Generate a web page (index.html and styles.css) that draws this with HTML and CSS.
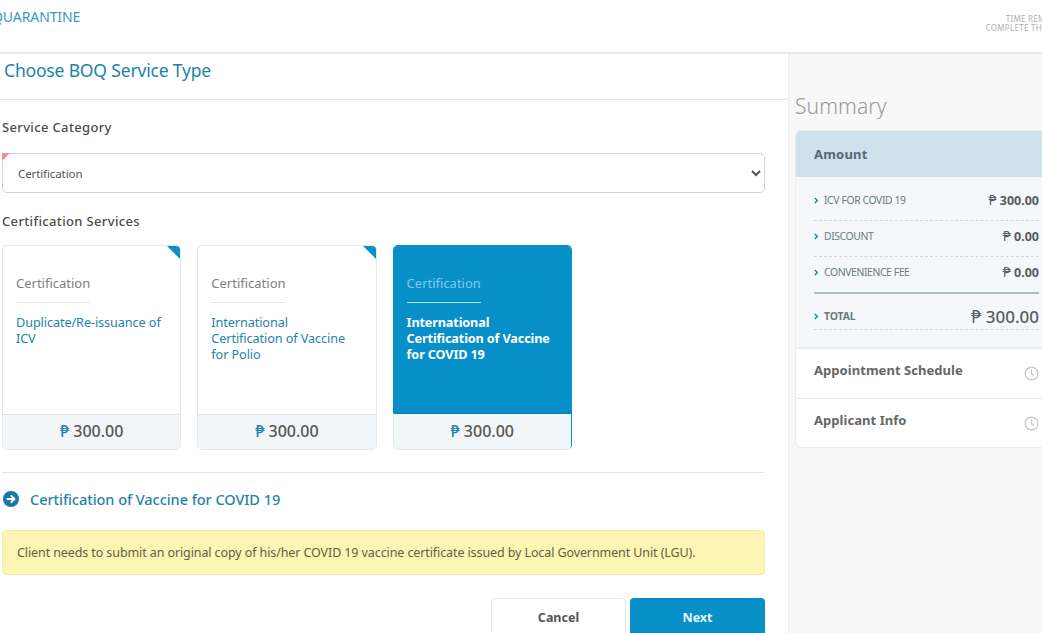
FILE: index.html
```html
<!DOCTYPE html>
<html lang="en">
<head>
<meta charset="utf-8">
<title>Choose BOQ Service Type</title>
<link rel="stylesheet" href="styles.css">
</head>
<body>
<header class="topbar">
  <div class="brand">QUARANTINE</div>
  <div class="timer"><div>TIME REMAINING</div><div>COMPLETE THIS FORM</div></div>
</header>
<div class="layout">
  <main class="main">
    <h1 class="page-title">Choose BOQ Service Type</h1>
    <div class="content">
      <h2 class="label label-first">Service Category</h2>
      <div class="select-wrap">
        <span class="required"></span>
        <select class="select"><option>Certification</option></select>
      </div>
      <h2 class="label label-second">Certification Services</h2>
      <div class="cards">
        <article class="card">
          <span class="corner"></span>
          <div class="card-body">
            <div class="card-cat">Certification</div>
            <div class="card-title">Duplicate/Re-issuance of ICV</div>
          </div>
          <div class="card-price"><span class="peso">₱</span> 300.00</div>
        </article>
        <article class="card">
          <span class="corner"></span>
          <div class="card-body">
            <div class="card-cat">Certification</div>
            <div class="card-title">International Certification of Vaccine for Polio</div>
          </div>
          <div class="card-price"><span class="peso">₱</span> 300.00</div>
        </article>
        <article class="card card-active">
          <div class="card-body">
            <div class="card-cat">Certification</div>
            <div class="card-title">International Certification of Vaccine for COVID 19</div>
          </div>
          <div class="card-price"><span class="peso">₱</span> 300.00</div>
        </article>
      </div>
      <hr class="divider">
      <div class="selected">
        <svg class="arrow-icon" viewBox="0 0 16 16" width="16" height="16"><circle cx="8" cy="8" r="8" fill="#1479a8"/><path d="M3.6 8h7.6M7.8 4.4 11.4 8l-3.6 3.6" fill="none" stroke="#fff" stroke-width="2"/></svg>
        <span>Certification of Vaccine for COVID 19</span>
      </div>
      <div class="alert">Client needs to submit an original copy of his/her COVID 19 vaccine certificate issued by Local Government Unit (LGU).</div>
      <div class="actions">
        <button class="btn btn-cancel">Cancel</button>
        <button class="btn btn-next">Next</button>
      </div>
    </div>
  </main>
  <aside class="side">
    <div class="side-title">Summary</div>
    <section class="panel">
      <div class="panel-head">Amount</div>
      <div class="amounts">
        <div class="row"><span class="row-label"><svg class="chev" viewBox="0 0 6 8" width="5" height="7"><path d="M1 1l3 3-3 3" fill="none" stroke="#1b84ab" stroke-width="1.7"/></svg>ICV FOR COVID 19</span><span class="row-val"><span class="peso-s">₱</span> 300.00</span></div>
        <div class="row"><span class="row-label"><svg class="chev" viewBox="0 0 6 8" width="5" height="7"><path d="M1 1l3 3-3 3" fill="none" stroke="#1b84ab" stroke-width="1.7"/></svg>DISCOUNT</span><span class="row-val"><span class="peso-s">₱</span> 0.00</span></div>
        <div class="row row-last"><span class="row-label"><svg class="chev" viewBox="0 0 6 8" width="5" height="7"><path d="M1 1l3 3-3 3" fill="none" stroke="#1b84ab" stroke-width="1.7"/></svg>CONVENIENCE FEE</span><span class="row-val"><span class="peso-s">₱</span> 0.00</span></div>
        <div class="row row-total"><span class="row-label"><svg class="chev" viewBox="0 0 6 8" width="5" height="7"><path d="M1 1l3 3-3 3" fill="none" stroke="#1b84ab" stroke-width="1.7"/></svg>TOTAL</span><span class="row-val"><span class="peso-s">₱</span> 300.00</span></div>
      </div>
      <div class="step step-first"><span>Appointment Schedule</span><svg class="clock" viewBox="0 0 16 16" width="15" height="15"><circle cx="8" cy="8" r="6.8" fill="none" stroke="#c4c8c9" stroke-width="1.3"/><path d="M8 3.8V8.4l2.6 1.6" fill="none" stroke="#c4c8c9" stroke-width="1.3"/></svg></div>
      <div class="step step-last"><span>Applicant Info</span><svg class="clock" viewBox="0 0 16 16" width="15" height="15"><circle cx="8" cy="8" r="6.8" fill="none" stroke="#c4c8c9" stroke-width="1.3"/><path d="M8 3.8V8.4l2.6 1.6" fill="none" stroke="#c4c8c9" stroke-width="1.3"/></svg></div>
    </section>
  </aside>
</div>
</body>
</html>
```
FILE: styles.css
```css
* { box-sizing: border-box; }
html, body { margin: 0; height: 633px; overflow: hidden; background: #fff; }
body { font-family: "Noto Sans", "Open Sans", sans-serif; color: #555; width: 1042px; }
.topbar { height: 54px; border-bottom: 2px solid #e9eaea; display: flex; justify-content: space-between; position: relative; overflow: hidden; }
.brand { margin: 7px 0 0 -8px; font-size: 14px; line-height: 20px; color: #3d9ab8; letter-spacing: -0.1px; }
.timer { margin: 14px -34px 0 0; font-size: 8px; line-height: 9px; color: #b0b0b0; text-align: right; white-space: nowrap; width: 106px; letter-spacing: 0.3px; }
.layout { display: flex; height: 579px; }
.main { width: 788px; flex: none; }
.page-title { margin: 0; height: 46px; border-bottom: 1px solid #dfe0e0; padding: 4px 0 0 4px; font-size: 17.5px; line-height: 24px; font-weight: 400; color: #2183a8; letter-spacing: -0.17px; }
.content { padding: 0 23px 0 2px; }
.label { margin: 0; font-size: 13px; line-height: 18px; font-weight: 500; color: #4c4c4c; letter-spacing: 0.35px; }
.label-first { padding-top: 18px; margin-bottom: 17px; }
.label-second { margin-top: 19px; margin-bottom: 15px; }
.select-wrap { position: relative; }
.required { position: absolute; left: 0; top: 0; width: 0; height: 0; border-top: 8px solid #ec8f93; border-right: 8px solid transparent; }
.select { display: block; width: 100%; height: 40px; padding: 0 11px; font: 11.5px "Noto Sans", sans-serif; color: #555; letter-spacing: -0.1px; background: #fff; border: 1px solid #d3d5d5; border-radius: 5px; }
.cards { display: flex; gap: 16px; }
.card { position: relative; width: 179.3px; height: 205px; display: flex; flex-direction: column; border: 1px solid #e6e8e9; border-radius: 5px; overflow: hidden; background: #fff; }
.corner { position: absolute; right: 0; top: 0; border-top: 13px solid #0b8fc6; border-left: 13px solid transparent; }
.card-body { flex: 1; padding: 28px 13px 0; }
.card-cat { font-size: 13px; line-height: 18px; color: #808080; padding-bottom: 11px; position: relative; }
.card-cat::after { content: ""; position: absolute; left: 0; bottom: 0; width: 74px; height: 1px; background: #e5e6e6; }
.card-title { margin-top: 11px; max-width: 148px; font-size: 12.7px; line-height: 16px; color: #1f83aa; letter-spacing: -0.1px; }
.card-price { height: 35px; flex: none; background: #f3f6f8; border-top: 1px solid #dfe3e5; text-align: center; font-size: 16px; line-height: 33px; font-weight: 500; color: #555; }
.peso { color: #1f83aa; }
.card-active { border-left: 0; border-color: #0790c8; border-bottom-color: #e6e8e9; }
.card-active .card-body { background: #0790c8; padding-left: 14px; }
.card-active .card-cat { color: #7fcbe9; }
.card-active .card-cat::after { background: #a8def2; }
.card-active .card-title { color: #fff; font-weight: 700; letter-spacing: -0.15px; }
.card-active .card-price { height: 36px; line-height: 34px; border-top-color: #0b7fae; border-left: 1px solid #e6e8e9; }
.divider { margin: 22px 0 0; border: 0; border-top: 1px solid #e6e7e7; }
.selected { display: flex; align-items: center; gap: 11px; margin-top: 16px; padding-left: 1px; font-size: 14.5px; line-height: 20px; font-weight: 500; color: #1f83aa; letter-spacing: -0.05px; }
.arrow-icon { flex: none; }
.alert { margin-top: 21px; height: 45px; padding: 0 14px; background: #fcf5b4; border: 1px solid #f3edb0; border-radius: 4px; font-size: 12.5px; line-height: 43px; color: #66603c; white-space: nowrap; letter-spacing: -0.1px; }
.actions { display: flex; justify-content: flex-end; gap: 4px; margin-top: 23px; }
.btn { width: 135px; height: 40px; padding: 0 0 2px; border-radius: 4px; font: 700 12.5px "Noto Sans", sans-serif; }
.btn-cancel { background: #fff; border: 1px solid #e6e7e7; color: #555; }
.btn-next { background: #0790c8; border: 0; color: #e8f6fc; }
.side { width: 262px; flex: none; background: #f8f8f8; border-left: 2px solid #f0f0f0; padding: 39px 0 0 5px; }
.side-title { font-size: 21px; line-height: 27px; color: #9a9a9a; font-weight: 300; letter-spacing: 0.1px; }
.panel { width: 253px; margin-top: 10px; background: #fff; border: 1px solid #ebecec; border-radius: 6px; overflow: hidden; }
.panel-head { height: 46px; padding: 0 18px; background: #cfe1ea; font-size: 13px; line-height: 46px; font-weight: 700; color: #566874; letter-spacing: 0.2px; }
.amounts { padding: 8px 8px 0 18px; height: 172px; background: #f4f8fa; border-bottom: 2px solid #eaeced; }
.row { height: 36px; display: flex; align-items: center; justify-content: space-between; border-bottom: 1px dashed #cfd8dc; padding-bottom: 5px; }
.row-last { height: 37px; border-bottom: 2px solid #a7c0cc; }
.row-total { height: 36px; padding-top: 9px; padding-bottom: 0; }
.row-label { font-size: 10.4px; color: #6a7a82; letter-spacing: -0.4px; display: flex; align-items: center; }
.row-total .row-label { font-weight: 700; letter-spacing: -0.1px; }
.chev { margin-right: 5px; flex: none; }
.row-val { font-size: 12.5px; font-weight: 700; color: #5b5b5b; margin-top: -2px; }
.peso-s { font-weight: 400; font-size: 14px; }
.row-total .row-val { font-size: 17px; font-weight: 500; margin-top: 0; }
.row-total .peso-s { font-size: 18px; }
.step { height: 50px; padding: 0 8px 7px 18px; display: flex; align-items: center; justify-content: space-between; border-top: 1px solid #e6e7e7; font-size: 13px; font-weight: 700; color: #666; letter-spacing: 0.05px; }
.step-first { border-top: 0; height: 49px; }
.step-last { height: 49px; }
.clock { margin-top: 7px; }
```
